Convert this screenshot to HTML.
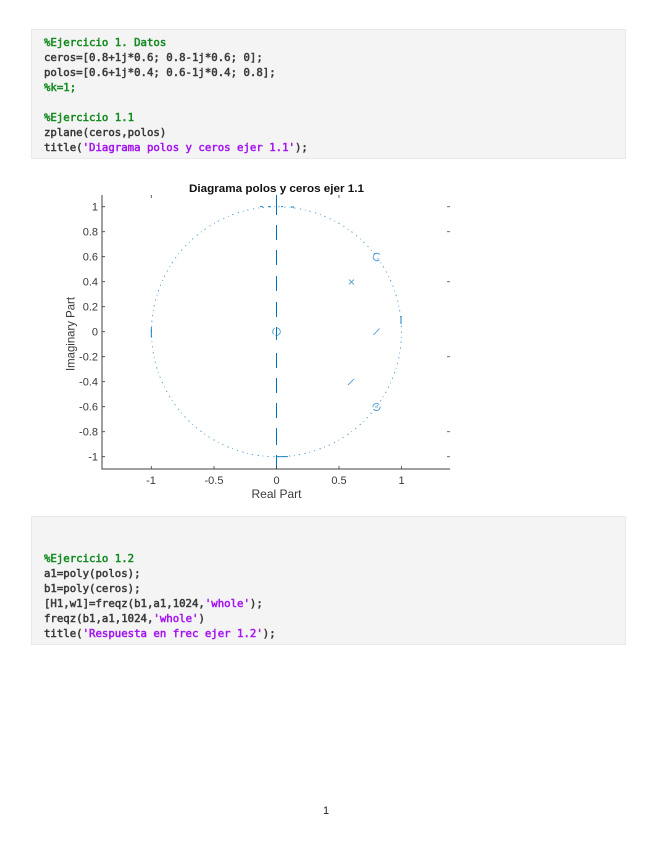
<!DOCTYPE html>
<html><head><meta charset="utf-8">
<style>
html,body{margin:0;padding:0;background:#fff;width:655px;height:848px;overflow:hidden}
body{position:relative;font-family:"Liberation Sans",sans-serif}
.box{position:absolute;left:31px;width:593px;background:#f4f4f4;border:1px solid #e9e9e9;border-width:1.5px}
.code{position:absolute;left:44px;margin:0;font:normal 10.7px/15px "DejaVu Sans Mono",monospace;color:#3a3a3a;-webkit-text-stroke:.5px currentColor;filter:blur(.35px);white-space:pre}
.g{color:#128a1e}.p{color:#a414f0}
svg{position:absolute;left:0;top:0}
#pg{position:absolute;left:323px;top:805px;font-size:11px;line-height:13px;color:#222;filter:blur(.3px)}
</style></head><body>
<div class="box" style="top:29px;height:128px"></div>
<pre class="code" style="top:35px"><span class="g">%Ejercicio 1. Datos</span>
ceros=[0.8+1j*0.6; 0.8-1j*0.6; 0];
polos=[0.6+1j*0.4; 0.6-1j*0.4; 0.8];
<span class="g">%k=1;</span>

<span class="g">%Ejercicio 1.1</span>
zplane(ceros,polos)
title(<span class="p">'Diagrama polos y ceros ejer 1.1'</span>);</pre>

<svg width="655" height="848" viewBox="0 0 655 848" style="filter:blur(.3px)">
<g fill="none" stroke="#0072bd">
<circle cx="276.5" cy="331.7" r="125" stroke-width=".9" stroke-dasharray="1.2 4.1 .8 3.6 1.4 4.6" opacity=".75"/>
<path d="M276.5 195V215M276.5 225V240M276.5 250V265M276.5 276V291M276.5 302V317M276.5 327V340M276.5 353V368M276.5 378V393M276.5 403V418M276.5 428V445M276.5 455V469" stroke-width="1"/>
<path d="M276.5 456.7H288M151.3 327V337M260 206.7h3M268 206.7h3M281 206.7h2M291 207h3M401 316V324" stroke-width=".9"/>
<g stroke-width=".8" opacity=".8">
<path d="M379.8 254.5A3.8 3.8 0 1 0 379.5 259.8"/>
<circle cx="376.5" cy="407" r="3.6" stroke-dasharray="9 2"/>
<path d="M375 407h2.5"/>
<circle cx="276.5" cy="331.7" r="3.8" stroke-dasharray="7 2"/>
<path d="M349 279.5l5 5M354 279.5l-5 5"/>
<path d="M373.5 335l6-6.5M348 385l6-6"/>
</g>
</g>
<g stroke="#404040" fill="none">
<path d="M102 195V469H450" stroke-width="1"/>
<path d="M102 206.7h3M102 231.7h3M102 256.7h3M102 281.7h3M102 306.7h3M102 331.7h3M102 356.7h3M102 381.7h3M102 406.7h3M102 431.7h3M102 456.7h3" stroke-width=".8"/>
<path d="M151.3 469v-3M214 469v-3M276.5 469v-3M339 469v-3M401.5 469v-3M151.3 195v3M339 195v3" stroke-width=".8"/>
<path d="M447 206.7h3M447 231.7h3M447 281.7h3M447 356.7h3M447 431.7h3M447 456.7h3" stroke-width=".9" opacity=".85"/>
</g>
<text x="276.5" y="192" text-anchor="middle" font-family="Liberation Sans" font-size="11" font-weight="bold" fill="#111" textLength="175" lengthAdjust="spacingAndGlyphs">Diagrama polos y ceros ejer 1.1</text>
<g font-family="Liberation Sans" font-size="11" fill="#3a3a3a" text-anchor="end">
<text x="98" y="210.5">1</text><text x="98" y="235.5">0.8</text><text x="98" y="260.5">0.6</text><text x="98" y="285.5">0.4</text><text x="98" y="310.5">0.2</text><text x="98" y="335.5">0</text><text x="98" y="360.5">-0.2</text><text x="98" y="385.5">-0.4</text><text x="98" y="410.5">-0.6</text><text x="98" y="435.5">-0.8</text><text x="98" y="460.5">-1</text>
</g>
<g font-family="Liberation Sans" font-size="11" fill="#3a3a3a" text-anchor="middle">
<text x="151" y="484">-1</text><text x="214" y="484">-0.5</text><text x="276.5" y="484">0</text><text x="339" y="484">0.5</text><text x="401.5" y="484">1</text>
<text x="276.5" y="498" font-size="11.6" textLength="50" lengthAdjust="spacingAndGlyphs">Real Part</text>
<text transform="translate(74.5 334) rotate(-90)" font-size="11.6" textLength="74" lengthAdjust="spacingAndGlyphs">Imaginary Part</text>
</g>
</svg>

<div class="box" style="top:516px;height:127px"></div>
<pre class="code" style="top:551px"><span class="g">%Ejercicio 1.2</span>
a1=poly(polos);
b1=poly(ceros);
[H1,w1]=freqz(b1,a1,1024,<span class="p">'whole'</span>);
freqz(b1,a1,1024,<span class="p">'whole'</span>)
title(<span class="p">'Respuesta en frec ejer 1.2'</span>);</pre>
<div id="pg">1</div>
</body></html>
